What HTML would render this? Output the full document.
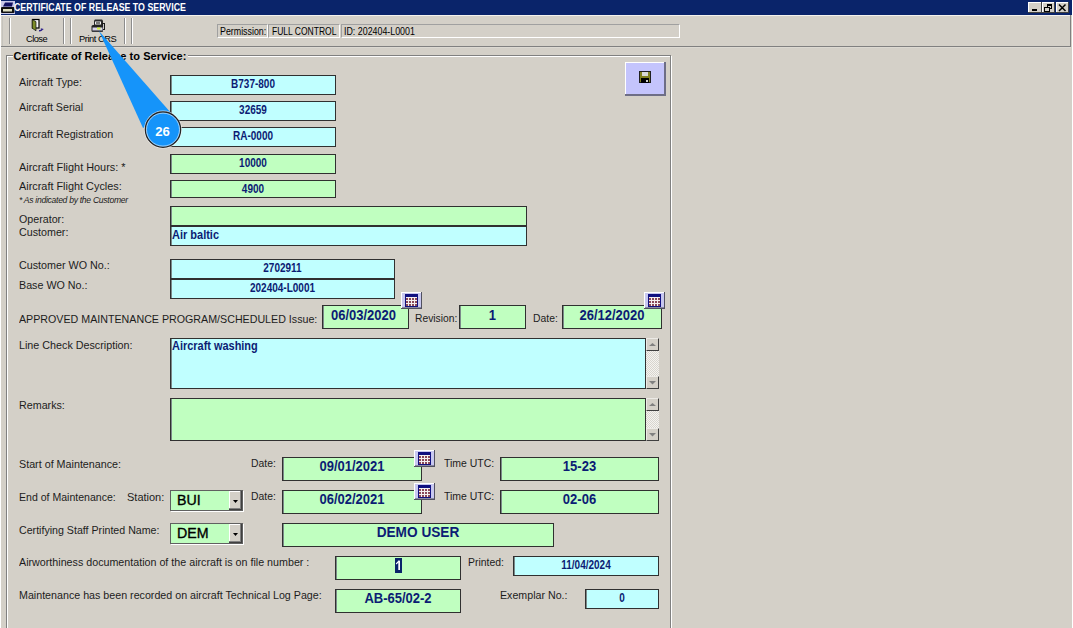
<!DOCTYPE html><html><head><meta charset="utf-8"><style>
*{margin:0;padding:0;box-sizing:content-box}
html,body{width:1073px;height:628px;overflow:hidden;background:#FFFFFF;font-family:"Liberation Sans",sans-serif}
.t{position:absolute;white-space:nowrap;line-height:1}
.bx{position:absolute;border:1px solid #303030;box-shadow:inset 1px 0 0 #7C8A8A}
.cal{position:absolute;width:21px;height:17px}
.cal svg{display:block}
.sb{position:absolute;background-color:#E4E2DC;background-image:repeating-conic-gradient(#F4F3F0 0 25%, #D8D5CE 0 50%);background-size:2px 2px}
.sbb{position:absolute;left:0;width:11px;height:11px;background:#D4D0C8;border-style:solid;border-width:1px;border-color:#ECEAE6 #404040 #404040 #ECEAE6}
.sbb svg{position:absolute;left:-1px;top:-1px}
.cb{position:absolute;border:1px solid #606060;box-shadow:1px 1px 0 #FFFFFF}
.cbb{position:absolute;right:0;top:0;width:13px;height:19px;background:#D4D0C8;box-shadow:inset -1px -1px 0 #404040, inset -2px -2px 0 #808080, inset 1px 1px 0 #FFFFFF}
.cbb svg{position:absolute;left:0;top:0}
</style></head><body>
<div style="position:absolute;left:1px;top:0;width:1071px;height:628px;background:#D4D0C8"></div>

<div style="position:absolute;left:1px;top:0;width:1071px;height:15px;background:#0A246A"></div>
<div style="position:absolute;left:1px;top:15px;width:1070px;height:1px;background:#F4F2EE"></div>
<svg style="position:absolute;left:1px;top:1px" width="14" height="13" viewBox="0 0 14 13">
<rect x="0" y="0" width="14" height="13" fill="#C8C8E8"/>
<path d="M4 1.5h8l-1 4h-9z" fill="#101060"/>
<path d="M1 6h11.5a1 1 0 0 1 1 1v4a1 1 0 0 1-1 1h-11.5a1 1 0 0 1-1-1v-4a1 1 0 0 1 1-1z" fill="#101010"/>
<rect x="2" y="8" width="9" height="2.5" fill="#E0E0C0"/>
</svg>
<div class="t" style="left:14.2px;top:3.27px;font-size:10.2px;color:#FFFFFF;font-weight:bold;font-style:normal;transform:scaleX(0.8654);transform-origin:0 0">CERTIFICATE OF RELEASE TO SERVICE</div>
<div style="position:absolute;left:1028px;top:2px;width:14px;height:11px;background:#D4D0C8;box-shadow:inset -1px -1px 0 #404040, inset 1px 1px 0 #FFFFFF"><svg width="13" height="11" style="position:absolute;left:0;top:0"><rect x="4" y="7" width="5" height="2" fill="#000"/></svg></div>
<div style="position:absolute;left:1042px;top:2px;width:13px;height:11px;background:#D4D0C8;box-shadow:inset -1px -1px 0 #404040, inset 1px 1px 0 #FFFFFF"><svg width="13" height="11" style="position:absolute;left:0;top:0"><path d="M5 2h5v5h-2v-1h1v-2h-3v1h-1z" fill="#000"/><rect x="2.5" y="5.5" width="5" height="4" fill="none" stroke="#000" stroke-width="1"/><rect x="2" y="5" width="6" height="1" fill="#000"/></svg></div>
<div style="position:absolute;left:1056px;top:2px;width:13px;height:11px;background:#D4D0C8;box-shadow:inset -1px -1px 0 #404040, inset 1px 1px 0 #FFFFFF"><svg width="13" height="11" style="position:absolute;left:0;top:0"><path d="M3 2.5L9.5 9M9.5 2.5L3 9" stroke="#000" stroke-width="1.5"/></svg></div>
<div style="position:absolute;left:1070px;top:15px;width:1px;height:32px;background:#808080"></div>
<div style="position:absolute;left:1px;top:46px;width:1070px;height:1px;background:#808080"></div>
<div style="position:absolute;left:1px;top:47px;width:1070px;height:1px;background:#DCD9D2"></div>
<div style="position:absolute;left:2px;top:16px;width:1px;height:30px;background:#C4C2BC"></div>
<div style="position:absolute;left:9px;top:18px;width:1px;height:26px;background:#8C8C8C"></div>
<div style="position:absolute;left:10px;top:18px;width:1px;height:26px;background:#FFFFFF"></div>
<div style="position:absolute;left:63px;top:18px;width:1px;height:26px;background:#8C8C8C"></div>
<div style="position:absolute;left:64px;top:18px;width:1px;height:26px;background:#FFFFFF"></div>
<div style="position:absolute;left:70px;top:18px;width:1px;height:26px;background:#8C8C8C"></div>
<div style="position:absolute;left:71px;top:18px;width:1px;height:26px;background:#FFFFFF"></div>
<div style="position:absolute;left:124px;top:18px;width:1px;height:26px;background:#8C8C8C"></div>
<div style="position:absolute;left:125px;top:18px;width:1px;height:26px;background:#FFFFFF"></div>
<div style="position:absolute;left:131px;top:18px;width:1px;height:26px;background:#8C8C8C"></div>
<div style="position:absolute;left:132px;top:18px;width:1px;height:26px;background:#FFFFFF"></div>
<svg style="position:absolute;left:30px;top:18px" width="16" height="16" viewBox="0 0 16 16">
<rect x="2.5" y="1.5" width="6.5" height="8.5" fill="#F8F8F8" stroke="#000" stroke-width="1.2"/>
<path d="M2.2 1.6 L6 3.6 V12.8 L2.2 10.2 Z" fill="#7C8C28" stroke="#101010" stroke-width="0.7"/>
<path d="M9 12.6 Q11 13 12 11.3" stroke="#2A1E8A" stroke-width="1.4" fill="none"/>
<path d="M10.6 10.2 L13.8 11 L11.8 12.6 Z" fill="#2A1E8A"/>
</svg>
<div class="t" style="left:26px;top:34.83px;font-size:9.3px;letter-spacing:-0.55px;color:#000;font-weight:normal;font-style:normal">Close</div>
<svg style="position:absolute;left:91px;top:19px" width="15" height="14" viewBox="0 0 15 14">
<path d="M3 1.5 L4 0.5 H11 L12 1.5 V6.5 H3 Z" fill="#2A2A2A"/>
<rect x="4" y="2.5" width="6" height="3" fill="#F0F0F0"/>
<rect x="5" y="3.5" width="4" height="1" fill="#000"/>
<rect x="11" y="4" width="3" height="7" fill="#1A1A1A"/>
<rect x="12" y="5" width="1" height="5" fill="#C8C8C8"/>
<path d="M2 6 H12 V12 Q12 13 11 13 H2 Q0.5 13 0.5 11.5 V7.5 Q0.5 6 2 6 Z" fill="#222"/>
<rect x="1.5" y="8.5" width="10" height="3" fill="#D8D4EC"/>
<rect x="6" y="8.5" width="3.5" height="2" fill="#D8F040"/>
<rect x="1.5" y="11.5" width="10" height="0.8" fill="#707080"/>
</svg>
<div class="t" style="left:79px;top:34.93px;font-size:9.3px;letter-spacing:-0.45px;color:#000;font-weight:normal;font-style:normal">Print CRS</div>
<div style="position:absolute;left:217px;top:24px;width:49px;height:12px;border-style:solid;border-width:1px;border-color:#A0A0A0 #FFFFFF #FFFFFF #A0A0A0"><div class="t" style="left:1.5px;top:2.1px;font-size:10.3px;transform:scaleX(0.86);transform-origin:0 0;color:#000">Permission:</div></div>
<div style="position:absolute;left:268px;top:24px;width:70px;height:12px;border-style:solid;border-width:1px;border-color:#A0A0A0 #FFFFFF #FFFFFF #A0A0A0"><div class="t" style="left:2.5px;top:2.1px;font-size:10.3px;transform:scaleX(0.826);transform-origin:0 0;color:#000">FULL CONTROL</div></div>
<div style="position:absolute;left:341px;top:24px;width:337px;height:12px;border-style:solid;border-width:1px;border-color:#A0A0A0 #FFFFFF #FFFFFF #A0A0A0"><div class="t" style="left:1.5px;top:2.1px;font-size:10.3px;transform:scaleX(0.86);transform-origin:0 0;color:#000">ID: 202404-L0001</div></div>
<div style="position:absolute;left:6px;top:55px;width:663px;height:600px;border:1px solid #808080;box-shadow:1px 1px 0 #FFFFFF, inset 1px 1px 0 #FFFFFF"></div>
<div class="t" style="left:12.5px;top:49.5px;height:12px;padding:0 2px 0 1px;background:#D4D0C8;font-size:11px;letter-spacing:0.05px;font-weight:bold;color:#000;line-height:12px">Certificate of Release to Service:</div>
<div style="position:absolute;left:625px;top:62px;width:41px;height:34px;background:#C4C4FC;box-shadow:inset -2px -2px 0 #6E6E86, inset 1px 1px 0 #FFFFFF">
<svg style="position:absolute;left:14px;top:9px" width="12" height="12" viewBox="0 0 12 12">
<rect x="0" y="0" width="12" height="12" fill="#202020"/>
<rect x="1" y="1" width="10" height="10" fill="#808020"/>
<rect x="3" y="1" width="6" height="4" fill="#D8D8D8"/>
<rect x="2" y="7" width="8" height="5" fill="#000"/>
<rect x="7" y="9" width="2" height="2" fill="#D0D0D0"/>
</svg></div>
<div class="t" style="left:19px;top:76.61px;font-size:11.8px;color:#1C1C1C;font-weight:normal;font-style:normal;transform:scaleX(0.9090);transform-origin:0 0">Aircraft Type:</div>
<div class="t" style="left:19px;top:102.11px;font-size:11.8px;color:#1C1C1C;font-weight:normal;font-style:normal;transform:scaleX(0.9068);transform-origin:0 0">Aircraft Serial</div>
<div class="t" style="left:19px;top:128.61px;font-size:11.8px;color:#1C1C1C;font-weight:normal;font-style:normal;transform:scaleX(0.9091);transform-origin:0 0">Aircraft Registration</div>
<div class="t" style="left:19px;top:161.61px;font-size:11.8px;color:#1C1C1C;font-weight:normal;font-style:normal;transform:scaleX(0.9235);transform-origin:0 0">Aircraft Flight Hours: *</div>
<div class="t" style="left:19px;top:181.01px;font-size:11.8px;color:#1C1C1C;font-weight:normal;font-style:normal;transform:scaleX(0.9221);transform-origin:0 0">Aircraft Flight Cycles:</div>
<div class="t" style="left:19px;top:195.72px;font-size:8.6px;letter-spacing:-0.295px;color:#1C1C1C;font-weight:normal;font-style:italic">* As indicated by the Customer</div>
<div class="t" style="left:19px;top:214.21px;font-size:11.8px;color:#1C1C1C;font-weight:normal;font-style:normal;transform:scaleX(0.9051);transform-origin:0 0">Operator:</div>
<div class="t" style="left:19px;top:227.21px;font-size:11.8px;color:#1C1C1C;font-weight:normal;font-style:normal;transform:scaleX(0.9074);transform-origin:0 0">Customer:</div>
<div class="t" style="left:19px;top:260.01px;font-size:11.8px;color:#1C1C1C;font-weight:normal;font-style:normal;transform:scaleX(0.9110);transform-origin:0 0">Customer WO No.:</div>
<div class="t" style="left:19px;top:279.91px;font-size:11.8px;color:#1C1C1C;font-weight:normal;font-style:normal;transform:scaleX(0.9083);transform-origin:0 0">Base WO No.:</div>
<div class="t" style="left:19px;top:313.91px;font-size:11.8px;color:#1C1C1C;font-weight:normal;font-style:normal;transform:scaleX(0.9048);transform-origin:0 0">APPROVED MAINTENANCE PROGRAM/SCHEDULED Issue:</div>
<div class="t" style="left:414.5px;top:313.11px;font-size:11.8px;color:#1C1C1C;font-weight:normal;font-style:normal;transform:scaleX(0.8734);transform-origin:0 0">Revision:</div>
<div class="t" style="left:533px;top:313.11px;font-size:11.8px;color:#1C1C1C;font-weight:normal;font-style:normal;transform:scaleX(0.8792);transform-origin:0 0">Date:</div>
<div class="t" style="left:19px;top:339.81px;font-size:11.8px;color:#1C1C1C;font-weight:normal;font-style:normal;transform:scaleX(0.9108);transform-origin:0 0">Line Check Description:</div>
<div class="t" style="left:19px;top:399.61px;font-size:11.8px;color:#1C1C1C;font-weight:normal;font-style:normal;transform:scaleX(0.9084);transform-origin:0 0">Remarks:</div>
<div class="t" style="left:19px;top:458.61px;font-size:11.8px;color:#1C1C1C;font-weight:normal;font-style:normal;transform:scaleX(0.9103);transform-origin:0 0">Start of Maintenance:</div>
<div class="t" style="left:251px;top:458.21px;font-size:11.8px;color:#1C1C1C;font-weight:normal;font-style:normal;transform:scaleX(0.8792);transform-origin:0 0">Date:</div>
<div class="t" style="left:444px;top:458.41px;font-size:11.8px;color:#1C1C1C;font-weight:normal;font-style:normal;transform:scaleX(0.8869);transform-origin:0 0">Time UTC:</div>
<div class="t" style="left:19px;top:491.61px;font-size:11.8px;color:#1C1C1C;font-weight:normal;font-style:normal;transform:scaleX(0.8943);transform-origin:0 0">End of Maintenance:</div>
<div class="t" style="left:127.4px;top:491.61px;font-size:11.8px;color:#1C1C1C;font-weight:normal;font-style:normal;transform:scaleX(0.9318);transform-origin:0 0">Station:</div>
<div class="t" style="left:251px;top:491.21px;font-size:11.8px;color:#1C1C1C;font-weight:normal;font-style:normal;transform:scaleX(0.8792);transform-origin:0 0">Date:</div>
<div class="t" style="left:444px;top:491.41px;font-size:11.8px;color:#1C1C1C;font-weight:normal;font-style:normal;transform:scaleX(0.8869);transform-origin:0 0">Time UTC:</div>
<div class="t" style="left:19px;top:524.61px;font-size:11.8px;color:#1C1C1C;font-weight:normal;font-style:normal;transform:scaleX(0.9014);transform-origin:0 0">Certifying Staff Printed Name:</div>
<div class="t" style="left:19px;top:556.61px;font-size:11.8px;color:#1C1C1C;font-weight:normal;font-style:normal;transform:scaleX(0.9074);transform-origin:0 0">Airworthiness documentation of the aircraft is on file number :</div>
<div class="t" style="left:467.6px;top:557.01px;font-size:11.8px;color:#1C1C1C;font-weight:normal;font-style:normal;transform:scaleX(0.8824);transform-origin:0 0">Printed:</div>
<div class="t" style="left:19px;top:589.61px;font-size:11.8px;color:#1C1C1C;font-weight:normal;font-style:normal;transform:scaleX(0.9056);transform-origin:0 0">Maintenance has been recorded on aircraft Technical Log Page:</div>
<div class="t" style="left:500.3px;top:589.61px;font-size:11.8px;color:#1C1C1C;font-weight:normal;font-style:normal;transform:scaleX(0.9028);transform-origin:0 0">Exemplar No.:</div>
<div class="bx" style="left:170px;top:75px;width:164px;height:18px;background:#C0FFFF"><div class="t" style="left:0px;right:0px;text-align:center;top:2.44px;font-size:12px;color:#0C1C74;font-weight:bold;transform:scaleX(0.8333)">B737-800</div></div>
<div class="bx" style="left:170px;top:101px;width:164px;height:18px;background:#C0FFFF"><div class="t" style="left:0px;right:0px;text-align:center;top:2.44px;font-size:12px;color:#0C1C74;font-weight:bold;transform:scaleX(0.8333)">32659</div></div>
<div class="bx" style="left:170px;top:127px;width:164px;height:18px;background:#C0FFFF"><div class="t" style="left:0px;right:0px;text-align:center;top:2.44px;font-size:12px;color:#0C1C74;font-weight:bold;transform:scaleX(0.8333)">RA-0000</div></div>
<div class="bx" style="left:170px;top:154px;width:164px;height:18px;background:#C0FFC0"><div class="t" style="left:0px;right:0px;text-align:center;top:2.44px;font-size:12px;color:#0C1C74;font-weight:bold;transform:scaleX(0.8333)">10000</div></div>
<div class="bx" style="left:170px;top:180px;width:164px;height:16px;background:#C0FFC0"><div class="t" style="left:0px;right:0px;text-align:center;top:2.44px;font-size:12px;color:#0C1C74;font-weight:bold;transform:scaleX(0.8333)">4900</div></div>
<div class="bx" style="left:170px;top:206px;width:355px;height:18px;background:#C0FFC0"></div>
<div class="bx" style="left:170px;top:226px;width:355px;height:18px;background:#C0FFFF"><div class="t" style="left:1px;top:1.72px;font-size:12.1px;color:#0C1C74;font-weight:bold;transform:scaleX(0.9091);transform-origin:0 0">Air baltic</div></div>
<div class="bx" style="left:170px;top:259px;width:223px;height:18px;background:#C0FFFF"><div class="t" style="left:0px;right:0px;text-align:center;top:2.44px;font-size:12px;color:#0C1C74;font-weight:bold;transform:scaleX(0.8333)">2702911</div></div>
<div class="bx" style="left:170px;top:279px;width:223px;height:18px;background:#C0FFFF"><div class="t" style="left:0px;right:0px;text-align:center;top:2.44px;font-size:12px;color:#0C1C74;font-weight:bold;transform:scaleX(0.8333)">202404-L0001</div></div>
<div class="bx" style="left:322px;top:305px;width:85px;height:22px;background:#C0FFC0"><div class="t" style="left:-2px;right:2px;text-align:center;top:2.35px;font-size:14px;color:#0C1C74;font-weight:bold;transform:scaleX(0.9286)">06/03/2020</div></div>
<div class="bx" style="left:459px;top:305px;width:65px;height:22px;background:#C0FFC0"><div class="t" style="left:0px;right:0px;text-align:center;top:2.35px;font-size:14px;color:#0C1C74;font-weight:bold;transform:scaleX(0.9286)">1</div></div>
<div class="bx" style="left:562px;top:305px;width:98px;height:22px;background:#C0FFC0"><div class="t" style="left:0px;right:0px;text-align:center;top:2.35px;font-size:14px;color:#0C1C74;font-weight:bold;transform:scaleX(0.9286)">26/12/2020</div></div>
<div class="cal" style="left:401px;top:292px"><svg width="21" height="17" viewBox="0 0 21 17"><rect x="0" y="0" width="21" height="17" fill="#C8C8F0"/><path d="M0 0H20V1H1V16H0Z" fill="#FFFFFF"/><path d="M20 0H21V17H0V16H20Z" fill="#505060"/><path d="M1 15H20V16H1Z" fill="#8888A0"/><rect x="4" y="2" width="13" height="13" fill="#101080"/><rect x="5" y="5" width="11" height="9" fill="#F4F0F0"/><rect x="5" y="6" width="2" height="2" fill="#8A4858"/><rect x="5" y="9" width="2" height="2" fill="#8A4858"/><rect x="5" y="12" width="2" height="2" fill="#8A4858"/><rect x="8" y="6" width="2" height="2" fill="#8A4858"/><rect x="8" y="9" width="2" height="2" fill="#8A4858"/><rect x="8" y="12" width="2" height="2" fill="#8A4858"/><rect x="11" y="6" width="2" height="2" fill="#8A4858"/><rect x="11" y="9" width="2" height="2" fill="#8A4858"/><rect x="11" y="12" width="2" height="2" fill="#8A4858"/><rect x="14" y="6" width="2" height="2" fill="#8A4858"/><rect x="14" y="9" width="2" height="2" fill="#8A4858"/><rect x="14" y="12" width="2" height="2" fill="#8A4858"/></svg></div>
<div class="cal" style="left:644px;top:292px"><svg width="21" height="17" viewBox="0 0 21 17"><rect x="0" y="0" width="21" height="17" fill="#C8C8F0"/><path d="M0 0H20V1H1V16H0Z" fill="#FFFFFF"/><path d="M20 0H21V17H0V16H20Z" fill="#505060"/><path d="M1 15H20V16H1Z" fill="#8888A0"/><rect x="4" y="2" width="13" height="13" fill="#101080"/><rect x="5" y="5" width="11" height="9" fill="#F4F0F0"/><rect x="5" y="6" width="2" height="2" fill="#8A4858"/><rect x="5" y="9" width="2" height="2" fill="#8A4858"/><rect x="5" y="12" width="2" height="2" fill="#8A4858"/><rect x="8" y="6" width="2" height="2" fill="#8A4858"/><rect x="8" y="9" width="2" height="2" fill="#8A4858"/><rect x="8" y="12" width="2" height="2" fill="#8A4858"/><rect x="11" y="6" width="2" height="2" fill="#8A4858"/><rect x="11" y="9" width="2" height="2" fill="#8A4858"/><rect x="11" y="12" width="2" height="2" fill="#8A4858"/><rect x="14" y="6" width="2" height="2" fill="#8A4858"/><rect x="14" y="9" width="2" height="2" fill="#8A4858"/><rect x="14" y="12" width="2" height="2" fill="#8A4858"/></svg></div>
<div class="bx" style="left:170px;top:338px;width:474px;height:49px;background:#C0FFFF"><div class="t" style="left:1px;top:1.41px;font-size:12.04px;color:#0C1C74;font-weight:bold;transform:scaleX(0.9095);transform-origin:0 0">Aircraft washing</div></div>
<div class="sb" style="left:646px;top:338px;width:13px;height:51px"><div class="sbb" style="top:0"><svg width="13" height="13"><path d="M3 8h7L6.5 5z" fill="#808080"/></svg></div><div class="sbb" style="bottom:0"><svg width="13" height="13"><path d="M3 5h7L6.5 8.5z" fill="#808080"/></svg></div></div>
<div class="bx" style="left:170px;top:398px;width:474px;height:41px;background:#C0FFC0"></div>
<div class="sb" style="left:646px;top:398px;width:13px;height:43px"><div class="sbb" style="top:0"><svg width="13" height="13"><path d="M3 8h7L6.5 5z" fill="#808080"/></svg></div><div class="sbb" style="bottom:0"><svg width="13" height="13"><path d="M3 5h7L6.5 8.5z" fill="#808080"/></svg></div></div>
<div class="bx" style="left:282px;top:457px;width:138px;height:22px;background:#C0FFC0"><div class="t" style="left:0px;right:0px;text-align:center;top:1.15px;font-size:14px;color:#0C1C74;font-weight:bold;transform:scaleX(0.9286)">09/01/2021</div></div>
<div class="bx" style="left:500px;top:457px;width:157px;height:22px;background:#C0FFC0"><div class="t" style="left:0px;right:0px;text-align:center;top:1.15px;font-size:14px;color:#0C1C74;font-weight:bold;transform:scaleX(0.9286)">15-23</div></div>
<div class="cal" style="left:414px;top:450px"><svg width="21" height="17" viewBox="0 0 21 17"><rect x="0" y="0" width="21" height="17" fill="#C8C8F0"/><path d="M0 0H20V1H1V16H0Z" fill="#FFFFFF"/><path d="M20 0H21V17H0V16H20Z" fill="#505060"/><path d="M1 15H20V16H1Z" fill="#8888A0"/><rect x="4" y="2" width="13" height="13" fill="#101080"/><rect x="5" y="5" width="11" height="9" fill="#F4F0F0"/><rect x="5" y="6" width="2" height="2" fill="#8A4858"/><rect x="5" y="9" width="2" height="2" fill="#8A4858"/><rect x="5" y="12" width="2" height="2" fill="#8A4858"/><rect x="8" y="6" width="2" height="2" fill="#8A4858"/><rect x="8" y="9" width="2" height="2" fill="#8A4858"/><rect x="8" y="12" width="2" height="2" fill="#8A4858"/><rect x="11" y="6" width="2" height="2" fill="#8A4858"/><rect x="11" y="9" width="2" height="2" fill="#8A4858"/><rect x="11" y="12" width="2" height="2" fill="#8A4858"/><rect x="14" y="6" width="2" height="2" fill="#8A4858"/><rect x="14" y="9" width="2" height="2" fill="#8A4858"/><rect x="14" y="12" width="2" height="2" fill="#8A4858"/></svg></div>
<div class="bx" style="left:282px;top:490px;width:138px;height:22px;background:#C0FFC0"><div class="t" style="left:0px;right:0px;text-align:center;top:1.15px;font-size:14px;color:#0C1C74;font-weight:bold;transform:scaleX(0.9286)">06/02/2021</div></div>
<div class="bx" style="left:500px;top:490px;width:157px;height:22px;background:#C0FFC0"><div class="t" style="left:0px;right:0px;text-align:center;top:1.15px;font-size:14px;color:#0C1C74;font-weight:bold;transform:scaleX(0.9286)">02-06</div></div>
<div class="cal" style="left:414px;top:483px"><svg width="21" height="17" viewBox="0 0 21 17"><rect x="0" y="0" width="21" height="17" fill="#C8C8F0"/><path d="M0 0H20V1H1V16H0Z" fill="#FFFFFF"/><path d="M20 0H21V17H0V16H20Z" fill="#505060"/><path d="M1 15H20V16H1Z" fill="#8888A0"/><rect x="4" y="2" width="13" height="13" fill="#101080"/><rect x="5" y="5" width="11" height="9" fill="#F4F0F0"/><rect x="5" y="6" width="2" height="2" fill="#8A4858"/><rect x="5" y="9" width="2" height="2" fill="#8A4858"/><rect x="5" y="12" width="2" height="2" fill="#8A4858"/><rect x="8" y="6" width="2" height="2" fill="#8A4858"/><rect x="8" y="9" width="2" height="2" fill="#8A4858"/><rect x="8" y="12" width="2" height="2" fill="#8A4858"/><rect x="11" y="6" width="2" height="2" fill="#8A4858"/><rect x="11" y="9" width="2" height="2" fill="#8A4858"/><rect x="11" y="12" width="2" height="2" fill="#8A4858"/><rect x="14" y="6" width="2" height="2" fill="#8A4858"/><rect x="14" y="9" width="2" height="2" fill="#8A4858"/><rect x="14" y="12" width="2" height="2" fill="#8A4858"/></svg></div>
<div class="cb" style="left:170px;top:490px;width:71px;height:19px;background:#C0FFC0"><div class="t" style="left:6px;top:2.3px;font-size:14.2px;font-weight:normal;color:#000;-webkit-text-stroke:0.35px #000">BUI</div><div class="cbb"><svg width="13" height="20"><path d="M4 9h5l-2.5 3z" fill="#000"/></svg></div></div>
<div class="cb" style="left:170px;top:523px;width:71px;height:19px;background:#C0FFC0"><div class="t" style="left:6px;top:2.3px;font-size:14.2px;font-weight:normal;color:#000;-webkit-text-stroke:0.35px #000">DEM</div><div class="cbb"><svg width="13" height="20"><path d="M4 9h5l-2.5 3z" fill="#000"/></svg></div></div>
<div class="bx" style="left:282px;top:523px;width:270px;height:22px;background:#C0FFC0"><div class="t" style="left:0px;right:0px;text-align:center;top:1.15px;font-size:14px;color:#0C1C74;font-weight:bold;transform:scaleX(0.9750)">DEMO USER</div></div>
<div class="bx" style="left:335px;top:556px;width:124px;height:22px;background:#C0FFC0"></div>
<svg style="position:absolute;left:395px;top:558px" width="7" height="15" viewBox="0 0 7 15"><rect width="7" height="15" fill="#0A246A"/><rect x="3.3" y="2.6" width="1.7" height="9.4" fill="#FFFFFF"/><path d="M0.8 5.6 L3.6 2.6 L4.4 3.8 L1.3 6.4 Z" fill="#FFFFFF"/></svg>
<div class="bx" style="left:513px;top:556px;width:144px;height:18px;background:#C0FFFF"><div class="t" style="left:0px;right:0px;text-align:center;top:2.44px;font-size:12px;color:#0C1C74;font-weight:bold;transform:scaleX(0.8333)">11/04/2024</div></div>
<div class="bx" style="left:335px;top:589px;width:124px;height:22px;background:#C0FFC0"><div class="t" style="left:0px;right:0px;text-align:center;top:1.15px;font-size:14px;color:#0C1C74;font-weight:bold;transform:scaleX(0.9286)">AB-65/02-2</div></div>
<div class="bx" style="left:585px;top:589px;width:72px;height:18px;background:#C0FFFF"><div class="t" style="left:0px;right:0px;text-align:center;top:2.44px;font-size:12px;color:#0C1C74;font-weight:bold;transform:scaleX(0.8333)">0</div></div>
<div style="position:absolute;left:1072px;top:0;width:1px;height:628px;background:#FFFFFF"></div>
<svg style="position:absolute;left:0;top:0" width="1073" height="628">
<polygon points="99,31 143,128 171,113" fill="#1594FA"/>
<circle cx="163" cy="129.6" r="19" fill="#F4F4F4" opacity="0.75"/>
<circle cx="163" cy="129.6" r="17.6" fill="#1594FA" stroke="#262626" stroke-width="1.4"/>
<circle cx="163" cy="129.6" r="16.5" fill="none" stroke="#DDEEFF" stroke-width="0.7"/>
<text x="162.6" y="135.9" font-family="Liberation Sans" font-weight="bold" font-size="13.2" fill="#FFFFFF" text-anchor="middle">26</text>
</svg>
</body></html>
